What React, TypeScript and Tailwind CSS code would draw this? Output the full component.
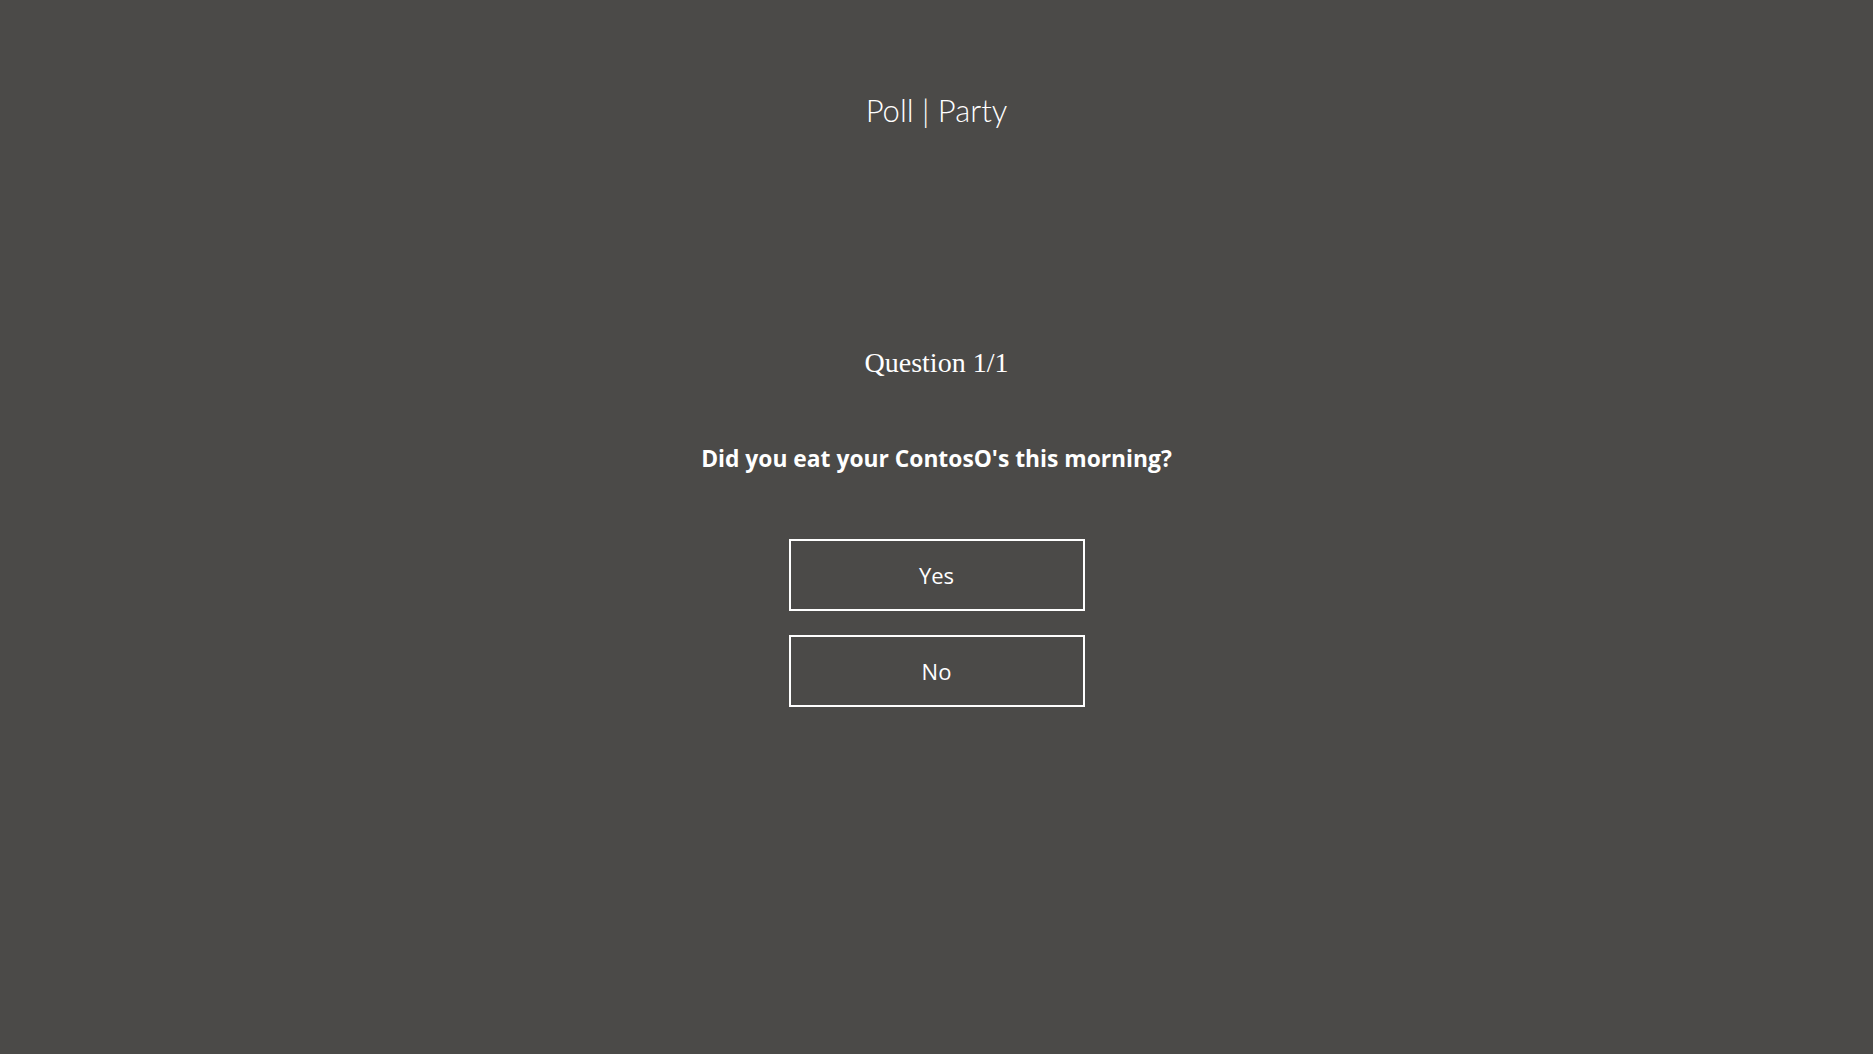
export default function App() {
  const options = ["Yes", "No"];
  return (
    <div className="min-h-screen w-full bg-[#4b4a48] text-white flex flex-col items-center">
      <h1 className="mt-[88px] h-[44px] text-[31px] leading-[44px] font-light [font-family:'Lato',sans-serif]">
        Poll | Party
      </h1>

      <h2 className="mt-[213px] h-[36px] text-[28px] leading-[36px] [font-family:'Liberation_Serif',serif]">
        Question 1/1
      </h2>

      <p className="mt-[62px] h-[32px] text-[22.8px] leading-[32px] font-bold [font-family:'Open_Sans',sans-serif]">
        Did you eat your ContosO's this morning?
      </p>

      <div className="mt-[64px] flex flex-col gap-[24px]">
        {options.map((o) => (
          <button
            key={o}
            className="w-[296px] h-[72px] border-2 border-white text-[22px] [font-family:'Open_Sans',sans-serif] text-white"
          >
            {o}
          </button>
        ))}
      </div>
    </div>
  );
}
